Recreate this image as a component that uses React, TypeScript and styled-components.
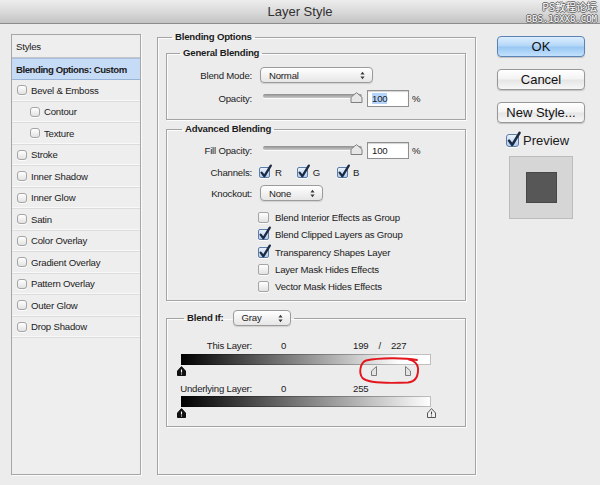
import styled, { createGlobalStyle } from "styled-components";

const GlobalStyle = createGlobalStyle`
  * { box-sizing: border-box; }
  html, body { margin: 0; padding: 0; background: #ececec; }
  body {
    font-family: "Liberation Sans", Arial, sans-serif;
    font-size: 9.6px;
    letter-spacing: -0.2px;
    color: #1b1b1b;
  }
`;

const Window = styled.div`
  position: relative;
  width: 600px;
  height: 485px;
  overflow: hidden;
  background: #ececec;
`;

const TitleBar = styled.div`
  height: 24px;
  border-bottom: 1px solid #8c8c8c;
  background: linear-gradient(#ededed, #d8d8d8 55%, #c3c3c3);
  display: flex;
  align-items: center;
  justify-content: center;
  font-size: 13px;
  letter-spacing: 0;
  color: #303030;
`;

const Watermark = styled.div`
  position: absolute;
  top: 1px;
  right: 3px;
  display: flex;
  flex-direction: column;
  align-items: flex-end;
  gap: 1px;
  color: #fff;
  letter-spacing: 0;
  text-shadow: -1px 0 #666, 1px 0 #666, 0 -1px #666, 0 1px #666;
`;

const MarkTop = styled.div`
  height: 12px;
  font-family: "Noto Sans CJK SC", sans-serif;
  font-size: 10.5px;
  line-height: 12px;
`;

const MarkBottom = styled.div`
  height: 10px;
  font-family: "DejaVu Sans Mono", monospace;
  font-size: 9px;
  line-height: 10px;
`;

const Body = styled.div`
  display: flex;
  align-items: flex-start;
  padding: 10px 0 0 11px;
`;

/* ---------- left styles list ---------- */

const StylesPanel = styled.div`
  width: 130px;
  height: 441px;
  border: 1px solid #a6a6a6;
  background: #eeeeee;
  box-shadow: 1px 1px 0 #fbfbfb;
`;

const StyleRow = styled.div<{ $indent?: number; $kind?: "head" | "active" }>`
  display: flex;
  align-items: center;
  gap: 4px;
  height: ${(p) => (p.$kind === "head" ? 23 : p.$kind === "active" ? 22 : 21.5)}px;
  padding-left: ${(p) => (p.$kind ? 4 : 5 + (p.$indent || 0))}px;
  font-weight: ${(p) => (p.$kind === "active" ? "bold" : "normal")};
  letter-spacing: ${(p) => (p.$kind === "active" ? "-0.45px" : "-0.2px")};
  background: ${(p) => (p.$kind === "active" ? "#c6dcf6" : "transparent")};
  border-bottom: 1px solid
    ${(p) => (p.$kind === "head" ? "#c4c4c4" : p.$kind === "active" ? "#97b3d6" : "#dcdcdc")};
  border-top: ${(p) => (p.$kind === "active" ? "1px solid #a9c1df" : "0")};
  box-shadow: ${(p) => (p.$kind ? "none" : "inset 0 -1px 0 #f8f8f8")};
`;

/* ---------- check boxes ---------- */

const Box = styled.span<{ $size: number; $on: boolean; $round: number }>`
  position: relative;
  flex: none;
  display: inline-block;
  width: ${(p) => p.$size}px;
  height: ${(p) => p.$size}px;
  border: 1px solid ${(p) => (p.$on ? "#5b7da8" : "#a5a5a5")};
  border-radius: ${(p) => p.$round}px;
  background: ${(p) =>
    p.$on ? "linear-gradient(#e9f2fc, #b3cdee)" : "linear-gradient(#ffffff, #e2e2e2)"};
  box-shadow: 0 1px 0 rgba(255, 255, 255, 0.8);
`;

const Tick = styled.svg`
  position: absolute;
  left: -1px;
  top: -4px;
  overflow: visible;
`;

function CheckBox({ on = false, size = 11, round = 2 }: { on?: boolean; size?: number; round?: number }) {
  return (
    <Box $size={size} $on={on} $round={round}>
      {on && (
        <Tick width={size + 2} height={size + 4} viewBox="0 0 13 15">
          <path
            d="M2.6 8.6 L5.4 12.2 L11.8 1.6"
            fill="none"
            stroke="#1c2a44"
            strokeWidth="2.3"
            strokeLinecap="round"
            strokeLinejoin="round"
          />
        </Tick>
      )}
    </Box>
  );
}

/* ---------- fieldsets ---------- */

const OuterGroup = styled.fieldset`
  margin: -3px 0 0 16px;
  padding: 4px 9px 47px 8px;
  width: 319px;
  min-width: 0;
  border: 1px solid #a4a4a4;
  box-shadow: 1px 1px 0 #fcfcfc, inset 1px 1px 0 #fcfcfc;
`;

const InnerGroup = styled.fieldset<{ $top: number; $pad: string }>`
  margin: ${(p) => p.$top}px 0 0 0;
  padding: ${(p) => p.$pad};
  min-width: 0;
  border: 1px solid #a4a4a4;
  box-shadow: 1px 1px 0 #fcfcfc, inset 1px 1px 0 #fcfcfc;
`;

const Caption = styled.legend<{ $offset: number }>`
  display: flex;
  align-items: center;
  gap: 9px;
  margin-left: ${(p) => p.$offset}px;
  padding: 0 3px;
  line-height: 12px;
  font-weight: bold;
`;

const FormGrid = styled.div<{ $rows: string; $gap: number }>`
  display: grid;
  grid-template-columns: 85px auto;
  grid-template-rows: ${(p) => p.$rows};
  column-gap: 8px;
  row-gap: ${(p) => p.$gap}px;
  align-items: center;
`;

const Label = styled.span`
  text-align: right;
  white-space: nowrap;
`;

const Controls = styled.div`
  display: flex;
  align-items: center;
`;

/* ---------- popup select ---------- */

const Popup = styled.div<{ $width: number }>`
  display: flex;
  align-items: center;
  justify-content: space-between;
  width: ${(p) => p.$width}px;
  height: 16px;
  padding: 0 7px 0 8px;
  border: 1px solid #9b9b9b;
  border-radius: 4px;
  background: linear-gradient(#ffffff, #f1f1f1 55%, #e6e6e6);
  box-shadow: 0 1px 1px rgba(0, 0, 0, 0.12);
  font-weight: normal;
`;

function Select({ value, width }: { value: string; width: number }) {
  return (
    <Popup $width={width}>
      <span>{value}</span>
      <svg width="5" height="9" viewBox="0 0 5 9">
        <path d="M0.4 3.6 L2.5 0.8 L4.6 3.6 Z M0.4 5.4 L2.5 8.2 L4.6 5.4 Z" fill="#3a3a3a" />
      </svg>
    </Popup>
  );
}

/* ---------- slider + number field ---------- */

const Slider = styled.div`
  position: relative;
  width: 99px;
  height: 17px;
  margin-left: 3px;
`;

const Track = styled.div`
  position: absolute;
  left: 0;
  right: 0;
  top: 4px;
  height: 4px;
  border-radius: 2px;
  background: linear-gradient(#8e8e8e, #c9c9c9);
  box-shadow: 0 1px 0 #fafafa;
`;

const Knob = styled.svg`
  position: absolute;
  right: -1px;
  top: 2px;
`;

const NumberField = styled.div`
  display: flex;
  align-items: center;
  width: 42px;
  height: 17px;
  margin-left: 5px;
  padding-left: 4px;
  border: 1px solid #8f8f8f;
  background: #fff;
  box-shadow: inset 0 1px 1px rgba(0, 0, 0, 0.18);
`;

const Selected = styled.span`
  background: #b4d4fc;
`;

const Percent = styled.span`
  margin-left: 3px;
`;

function OpacityControl({ selected }: { selected?: boolean }) {
  return (
    <Controls>
      <Slider>
        <Track />
        <Knob width="13" height="11" viewBox="0 0 13 11">
          <path
            d="M1 10.5 V6 Q1 5 2 4.3 L6.5 0.7 L11 4.3 Q12 5 12 6 V10.5 Z"
            fill="#e6e6e6"
            stroke="#7e7e7e"
          />
        </Knob>
      </Slider>
      <NumberField>{selected ? <Selected>100</Selected> : "100"}</NumberField>
      <Percent>%</Percent>
    </Controls>
  );
}

/* ---------- channels + option list ---------- */

const Channel = styled.span<{ $space: number }>`
  display: inline-flex;
  align-items: center;
  gap: 5px;
  margin-right: ${(p) => p.$space}px;
  margin-left: -1px;
`;

const OptionList = styled.div`
  margin: 8px 0 0 91px;
`;

const OptionRow = styled.div`
  display: flex;
  align-items: center;
  gap: 6px;
  height: 17.3px;
`;

/* ---------- blend if ---------- */

const ValuesRow = styled.div<{ $top: number }>`
  display: grid;
  grid-template-columns: 85px 101px auto;
  height: 12px;
  line-height: 12px;
  margin-top: ${(p) => p.$top}px;
  white-space: nowrap;
`;

const FirstValue = styled.span`
  padding-left: 29px;
`;

const Slash = styled.span`
  margin: 0 10px;
`;

const BarBlock = styled.div<{ $top: number }>`
  position: relative;
  width: 250px;
  margin: ${(p) => p.$top}px 0 0 14px;
`;

const Ramp = styled.div<{ $stop: number }>`
  height: 11px;
  background: linear-gradient(to right, #000, #fff ${(p) => p.$stop}%);
  box-shadow: inset 0 0 0 1px rgba(0, 0, 0, 0.25);
`;

const ThumbLane = styled.div`
  position: relative;
  height: 11px;
`;

const Thumb = styled.svg`
  position: absolute;
  top: 1px;
`;

type ThumbKind = "dark" | "light" | "left" | "right";

function RampThumb({ kind, value }: { kind: ThumbKind; value: number }) {
  const x = (value / 255) * 250;
  if (kind === "left" || kind === "right") {
    const pts = kind === "left" ? "5.5,0.5 0.5,5 0.5,9.5 5.5,9.5" : "0.5,0.5 5.5,5 5.5,9.5 0.5,9.5";
    const left = kind === "left" ? x - 5 : x + 1;
    return (
      <Thumb width="6" height="10" viewBox="0 0 6 10" style={{ left }}>
        <polygon points={pts} fill="#e4e4e4" stroke="#7a7a7a" />
      </Thumb>
    );
  }
  const dark = kind === "dark";
  return (
    <Thumb width="9" height="10" viewBox="0 0 9 10" style={{ left: x - 4.5 }}>
      <polygon
        points="0.5,9.5 0.5,5 4.5,0.6 8.5,5 8.5,9.5"
        fill={dark ? "#111" : "#f2f2f2"}
        stroke={dark ? "#111" : "#555"}
      />
      <path d="M4.5 3.5 V6.6 M4.5 7.6 V8.4" stroke={dark ? "#fff" : "#444"} strokeWidth="1.1" />
    </Thumb>
  );
}

const Circle = styled.svg`
  position: absolute;
  left: 176px;
  top: 2px;
  overflow: visible;
`;

/* ---------- right column ---------- */

const Side = styled.div`
  display: flex;
  flex-direction: column;
  width: 88px;
  margin: 2px 0 0 21px;
`;

const Button = styled.div<{ $primary?: boolean }>`
  display: flex;
  align-items: center;
  justify-content: center;
  height: 21px;
  margin-top: ${(p) => (p.$primary ? 0 : 12)}px;
  border: 1px solid ${(p) => (p.$primary ? "#5a84b4" : "#979797")};
  border-radius: 4px;
  background: ${(p) =>
    p.$primary
      ? "linear-gradient(#dcedfd, #b3d6f8 48%, #97c6f2 52%, #c2e1fd)"
      : "linear-gradient(#ffffff, #f3f3f3 48%, #e5e5e5 52%, #f7f7f7)"};
  box-shadow: 0 1px 1px rgba(0, 0, 0, 0.18);
  font-size: 13px;
  letter-spacing: 0;
  color: #111;
`;

const PreviewRow = styled.div`
  display: flex;
  align-items: center;
  gap: 4px;
  height: 14px;
  margin-top: 10px;
  padding-left: 9px;
  font-size: 13px;
  letter-spacing: 0;
`;

const Swatch = styled.div`
  display: flex;
  align-items: center;
  justify-content: center;
  width: 64px;
  height: 63px;
  margin: 9px 0 0 12px;
  border: 1px solid #bcbcbc;
  background: #d6d6d6;
`;

const SwatchFill = styled.div`
  width: 31px;
  height: 31px;
  border: 1px solid #474747;
  background: #575757;
`;

const STYLE_ITEMS: { label: string; indent?: number }[] = [
  { label: "Bevel & Emboss" },
  { label: "Contour", indent: 13 },
  { label: "Texture", indent: 13 },
  { label: "Stroke" },
  { label: "Inner Shadow" },
  { label: "Inner Glow" },
  { label: "Satin" },
  { label: "Color Overlay" },
  { label: "Gradient Overlay" },
  { label: "Pattern Overlay" },
  { label: "Outer Glow" },
  { label: "Drop Shadow" },
];

const OPTIONS = [
  { label: "Blend Interior Effects as Group", on: false },
  { label: "Blend Clipped Layers as Group", on: true },
  { label: "Transparency Shapes Layer", on: true },
  { label: "Layer Mask Hides Effects", on: false },
  { label: "Vector Mask Hides Effects", on: false },
];

export default function App() {
  return (
    <Window>
      <GlobalStyle />
      <TitleBar>Layer Style</TitleBar>
      <Watermark>
        <MarkTop>PS教程论坛</MarkTop>
        <MarkBottom>BBS.16XX8.COM</MarkBottom>
      </Watermark>
      <Body>
        <StylesPanel>
          <StyleRow $kind="head">Styles</StyleRow>
          <StyleRow $kind="active">Blending Options: Custom</StyleRow>
          {STYLE_ITEMS.map((item) => (
            <StyleRow key={item.label} $indent={item.indent}>
              <CheckBox size={10} round={3} />
              {item.label}
            </StyleRow>
          ))}
        </StylesPanel>

        <OuterGroup>
          <Caption $offset={6}>Blending Options</Caption>

          <InnerGroup $top={0} $pad="8px 0 12px 0">
            <Caption $offset={13}>General Blending</Caption>
            <FormGrid $rows="16px 17px" $gap={7}>
              <Label>Blend Mode:</Label>
              <Select value="Normal" width={113} />
              <Label>Opacity:</Label>
              <OpacityControl selected />
            </FormGrid>
          </InnerGroup>

          <InnerGroup $top={3} $pad="7px 0 5px 0">
            <Caption $offset={15}>Advanced Blending</Caption>
            <FormGrid $rows="17px 14px 16px" $gap={6}>
              <Label>Fill Opacity:</Label>
              <OpacityControl />
              <Label>Channels:</Label>
              <Controls>
                <Channel $space={16}>
                  <CheckBox on />R
                </Channel>
                <Channel $space={18}>
                  <CheckBox on />G
                </Channel>
                <Channel $space={0}>
                  <CheckBox on />B
                </Channel>
              </Controls>
              <Label>Knockout:</Label>
              <Select value="None" width={63} />
            </FormGrid>
            <OptionList>
              {OPTIONS.map((o) => (
                <OptionRow key={o.label}>
                  <CheckBox on={o.on} />
                  {o.label}
                </OptionRow>
              ))}
            </OptionList>
          </InnerGroup>

          <InnerGroup $top={9} $pad="14px 0 8px 0">
            <Caption $offset={17}>
              <span>Blend If:</span>
              <Select value="Gray" width={58} />
            </Caption>
            <ValuesRow $top={0}>
              <Label>This Layer:</Label>
              <FirstValue>0</FirstValue>
              <span>
                199<Slash>/</Slash>227
              </span>
            </ValuesRow>
            <BarBlock $top={2}>
              <Ramp $stop={88} />
              <ThumbLane>
                <RampThumb kind="dark" value={0} />
                <RampThumb kind="left" value={199} />
                <RampThumb kind="right" value={227} />
              </ThumbLane>
              <Circle width="64" height="30" viewBox="0 0 64 30">
                <path
                  d="M60 4 C48 1.5, 22 1.5, 9 4.5 C3 7, 1.5 17, 5.5 22 C11 27.5, 30 27.5, 51 26.5 C59 25.5, 61.5 20, 61 12 C60.5 8, 58.5 5, 52 3.6"
                  fill="none"
                  stroke="#e2161c"
                  strokeWidth="1.9"
                  strokeLinecap="round"
                />
              </Circle>
            </BarBlock>
            <ValuesRow $top={7}>
              <Label>Underlying Layer:</Label>
              <FirstValue>0</FirstValue>
              <span>255</span>
            </ValuesRow>
            <BarBlock $top={1}>
              <Ramp $stop={100} />
              <ThumbLane>
                <RampThumb kind="dark" value={0} />
                <RampThumb kind="light" value={255} />
              </ThumbLane>
            </BarBlock>
          </InnerGroup>
        </OuterGroup>

        <Side>
          <Button $primary>OK</Button>
          <Button>Cancel</Button>
          <Button>New Style...</Button>
          <PreviewRow>
            <CheckBox on size={13} round={3} />
            Preview
          </PreviewRow>
          <Swatch>
            <SwatchFill />
          </Swatch>
        </Side>
      </Body>
    </Window>
  );
}
